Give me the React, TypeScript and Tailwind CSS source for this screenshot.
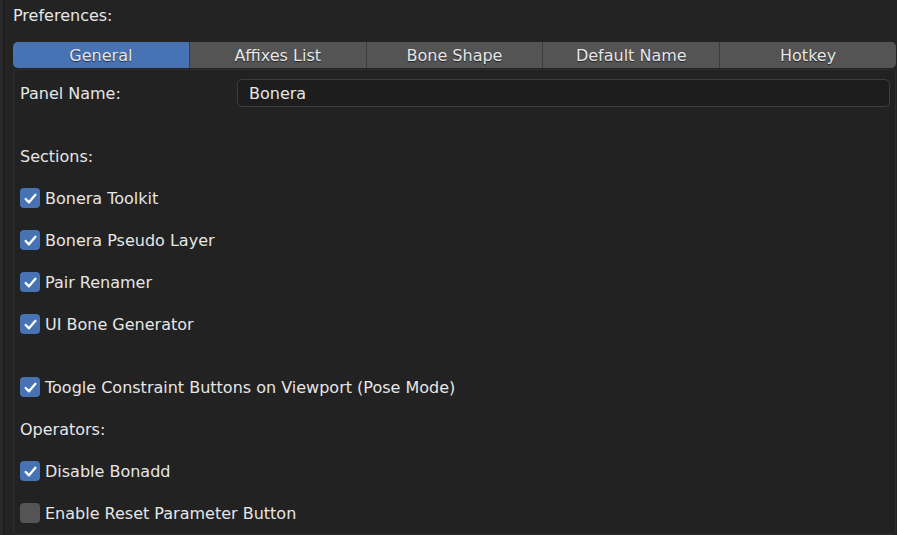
import { ReactNode } from "react";

const TABS = ["General", "Affixes List", "Bone Shape", "Default Name", "Hotkey"];

function Check({ checked }: { checked: boolean }) {
  return (
    <div
      className={`w-[20px] h-[20px] rounded-[4px] flex items-center justify-center shrink-0 ${
        checked ? "bg-[#4772b3]" : "bg-[#545454]"
      }`}
    >
      {checked && (
        <svg width="15" height="15" viewBox="0 0 14 14" fill="none">
          <path d="M2.5 7.5 L5.6 10.6 L11.6 3.6" stroke="#ffffff" strokeWidth="2.2" strokeLinecap="round" strokeLinejoin="round" />
        </svg>
      )}
    </div>
  );
}

function Row({ children }: { children: ReactNode }) {
  return <div className="h-[42px] flex items-center">{children}</div>;
}

function CheckRow({ label, checked = true }: { label: string; checked?: boolean }) {
  return (
    <Row>
      <div className="flex items-center gap-[5px]">
        <Check checked={checked} />
        <span className="pt-[2px]">{label}</span>
      </div>
    </Row>
  );
}

export default function App() {
  return (
    <div
      className="w-[897px] h-[535px] bg-[#232323] flex overflow-hidden text-[16px] leading-none text-[#e6e6e6]"
      style={{ fontFamily: '"DejaVu Sans", "Liberation Sans", sans-serif' }}
    >
      {/* left edge strip */}
      <div className="w-[3px] bg-[#2a2a2a] border-r border-[#1a1a1a] shrink-0 box-content" />

      <div className="flex-1 pl-[9px] pr-px flex flex-col">
        <div className="h-[32px] flex items-center pt-[2px]">Preferences:</div>

        {/* tabs */}
        <div className="mt-[12px] h-[28px] flex gap-px bg-[#3d3d3d] rounded-[5px] overflow-hidden">
          {TABS.map((t, i) => (
            <div
              key={t}
              className={`flex-1 flex items-center justify-center pt-[3px] [text-shadow:0_1px_1px_rgba(0,0,0,0.6)] ${
                i === 0 ? "bg-[#4772b3]" : "bg-[#545454]"
              }`}
            >
              {t}
            </div>
          ))}
        </div>

        {/* panel */}
        <div className="mt-px flex-1 border border-[#2e2e2e] rounded-[5px] bg-[#222222] pt-[2px] pl-[6px] pr-[5px]">
          <Row>
            <div className="w-[217px] shrink-0 pt-[2px]">Panel Name:</div>
            <div className="flex-1 h-[28px] rounded-[5px] border border-[#3d3d3d] bg-[#1d1d1d] flex items-center px-[11px] pt-[2px]">
              Bonera
            </div>
          </Row>
          <div className="h-[21px]" />
          <Row>
            <span className="pt-[2px]">Sections:</span>
          </Row>
          <CheckRow label="Bonera Toolkit" />
          <CheckRow label="Bonera Pseudo Layer" />
          <CheckRow label="Pair Renamer" />
          <CheckRow label="UI Bone Generator" />
          <div className="h-[21px]" />
          <CheckRow label="Toogle Constraint Buttons on Viewport (Pose Mode)" />
          <Row>
            <span className="pt-[2px]">Operators:</span>
          </Row>
          <CheckRow label="Disable Bonadd" />
          <CheckRow label="Enable Reset Parameter Button" checked={false} />
        </div>
      </div>
    </div>
  );
}
